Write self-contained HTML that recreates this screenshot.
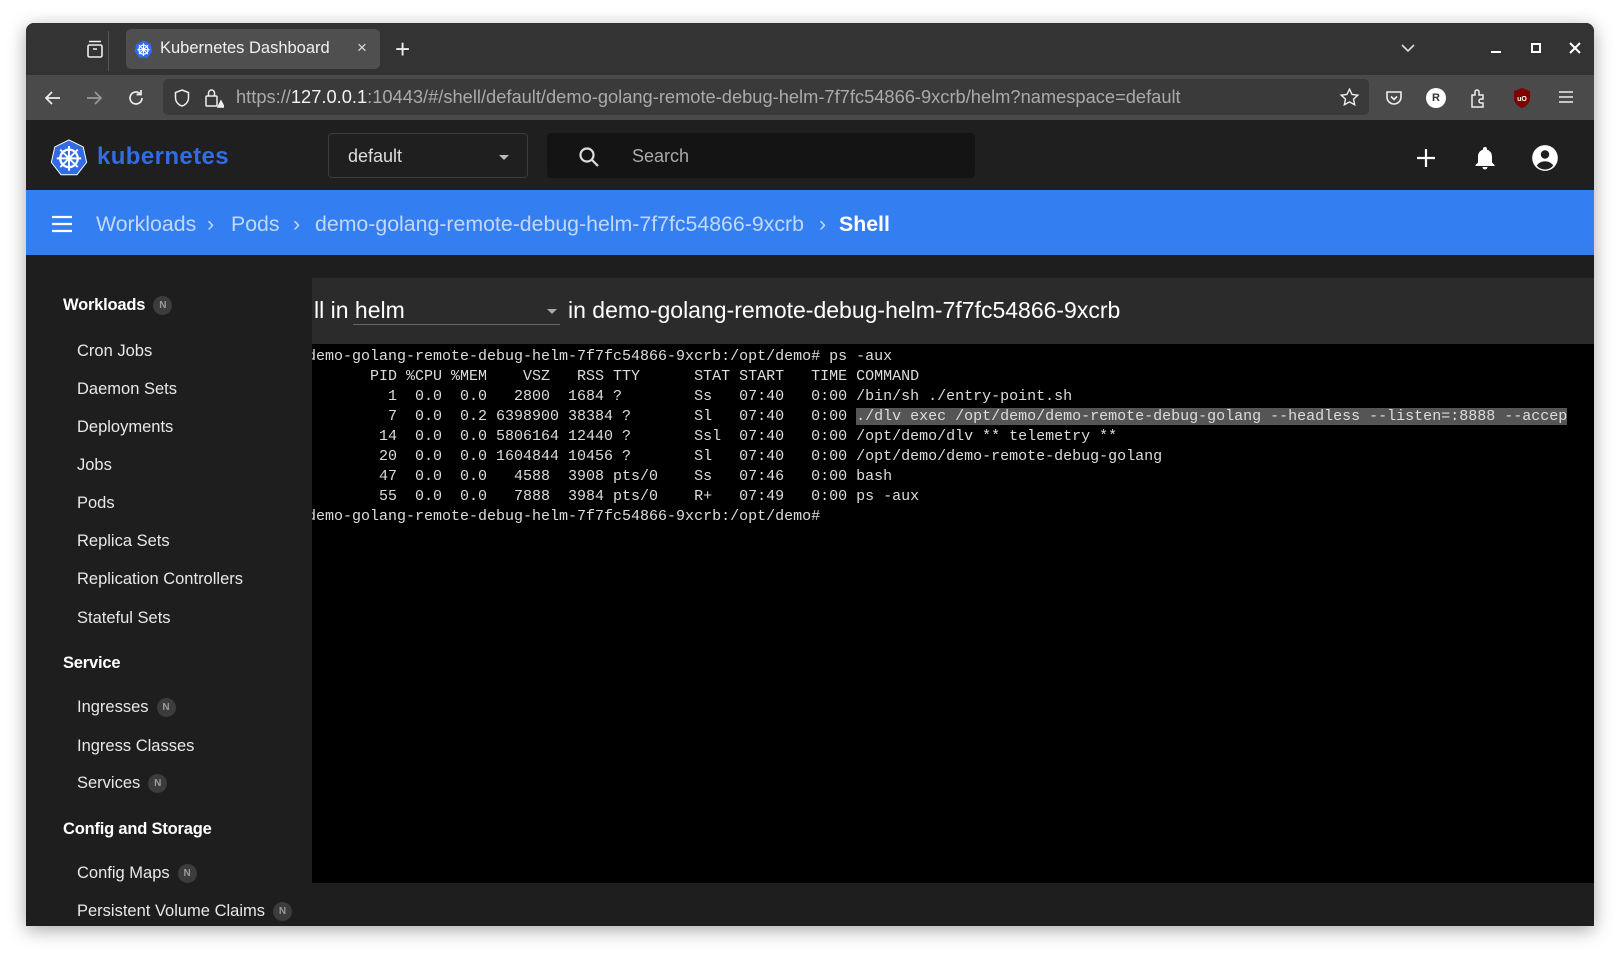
<!DOCTYPE html>
<html><head><meta charset="utf-8"><style>
*{margin:0;padding:0;box-sizing:border-box}
body{width:1620px;height:954px;background:#fff;position:relative;overflow:hidden;font-family:"Liberation Sans",sans-serif}
.win{position:absolute;left:26px;top:23px;width:1568px;height:903px;background:#1e1e1e;border-radius:8px 8px 0 0;overflow:hidden;box-shadow:0 4px 18px rgba(0,0,0,.35)}
.abs{position:absolute}
.tabbar{left:0;top:0;width:1568px;height:52px;background:#333}
.tab{left:100px;top:6px;width:254px;height:40px;background:#4f4f4f;border-radius:5px}
.toolbar{left:0;top:52px;width:1568px;height:45px;background:#4a4a4a}
.url{left:137px;top:56px;width:1206px;height:36px;background:#3a3a3a;border-radius:5px}
.hdr{left:0;top:97px;width:1568px;height:70px;background:#1f1f1f}
.blue{left:0;top:167px;width:1568px;height:65px;background:#337ef0}
.bc{color:rgba(255,255,255,.7);font-size:21.3px;top:189px}
.side{color:#e8e8e8;font-size:16.5px}
.sec{color:#fff;font-size:16.5px;font-weight:bold;letter-spacing:-.2px}
.n{display:inline-block;width:19px;height:19px;border-radius:50%;background:#3c3c3c;color:#9a9a9a;font-size:10px;text-align:center;line-height:19px;vertical-align:middle;margin-left:8px;font-weight:bold}
.term{left:286px;top:321px;width:1282px;height:539px;background:#000;overflow:hidden}
pre{font-family:"Liberation Mono",monospace;font-size:15px;line-height:20px;color:#ddd;position:absolute;left:-5px;top:3px;white-space:pre}
.hl{background:#555}
</style></head><body>
<div class="win">
 <div class="abs tabbar"></div>
 <svg class="abs" style="left:59px;top:16px" width="20" height="20" viewBox="0 0 20 20" fill="none" stroke="#eee" stroke-width="1.6"><rect x="3" y="6" width="14" height="12" rx="1.5"/><path d="M4 2.5h12M8 10h4"/></svg>
 <div class="abs" style="left:82px;top:8px;width:1px;height:40px;background:#555"></div>
 <div class="abs tab"></div>
 <svg class="abs" style="left:108px;top:17px" width="19" height="19" viewBox="0 0 20 20"><polygon points="10,0.5 17.5,4.2 19.3,12.3 14.2,18.8 5.8,18.8 0.7,12.3 2.5,4.2" fill="#326ce5"/><circle cx="10" cy="10.2" r="4.8" fill="none" stroke="#fff" stroke-width="1.4"/><path d="M10 3.5v13.4M3.6 10.2h12.8M5.3 5.5l9.4 9.4M14.7 5.5l-9.4 9.4" stroke="#fff" stroke-width="1.2"/></svg>
 <div class="abs" style="left:134px;top:16px;color:#f0f0f0;font-size:16.5px">Kubernetes Dashboard</div>
 <div class="abs" style="left:331px;top:15px;color:#ddd;font-size:17px">×</div>
 <div class="abs" style="left:369px;top:11px;color:#eee;font-size:26px;font-weight:300">+</div>
 <svg class="abs" style="left:1374px;top:19px" width="16" height="12" viewBox="0 0 16 12" fill="none" stroke="#ddd" stroke-width="1.6"><path d="M2 3l6 6 6-6"/></svg>
 <div class="abs" style="left:1465px;top:28px;width:10px;height:2px;background:#fff"></div>
 <div class="abs" style="left:1505px;top:20px;width:10px;height:10px;border:2px solid #fff"></div>
 <svg class="abs" style="left:1543px;top:19px" width="12" height="12" viewBox="0 0 12 12" stroke="#fff" stroke-width="2"><path d="M1 1l10 10M11 1L1 11"/></svg>

 <div class="abs toolbar"></div>
 <div class="abs url"></div>
 <svg class="abs" style="left:17px;top:65px" width="20" height="20" viewBox="0 0 20 20" fill="none" stroke="#eee" stroke-width="1.7"><path d="M17 10H4M9 4l-6 6 6 6"/></svg>
 <svg class="abs" style="left:58px;top:65px" width="20" height="20" viewBox="0 0 20 20" fill="none" stroke="#999" stroke-width="1.7"><path d="M3 10h13M11 4l6 6-6 6"/></svg>
 <svg class="abs" style="left:100px;top:65px" width="20" height="20" viewBox="0 0 20 20" fill="none" stroke="#eee" stroke-width="1.7"><path d="M16 10a6 6 0 1 1-2-4.5"/><path d="M15 2v4.5h-4.5"/></svg>
 <svg class="abs" style="left:147px;top:65px" width="18" height="20" viewBox="0 0 18 20" fill="none" stroke="#eee" stroke-width="1.5"><path d="M9 2l6.5 2.5v5c0 4.5-3 7.5-6.5 8.5-3.5-1-6.5-4-6.5-8.5v-5z"/></svg>
 <svg class="abs" style="left:178px;top:64px" width="20" height="22" viewBox="0 0 20 22" fill="none" stroke="#eee" stroke-width="1.5"><rect x="2" y="9" width="11" height="10" rx="1"/><path d="M4.5 9V6a3 3 0 0 1 6 0v3"/><path d="M14 20l3-6 3 6z" fill="#eee"/></svg>
 <div class="abs" style="left:210px;top:63px;color:#aaa;font-size:18.3px;white-space:nowrap">https://<span style="color:#f2f2f2">127.0.0.1</span>:10443/#/shell/default/demo-golang-remote-debug-helm-7f7fc54866-9xcrb/helm?namespace=default</div>
 <svg class="abs" style="left:1313px;top:64px" width="21" height="21" viewBox="0 0 24 24" fill="none" stroke="#eee" stroke-width="1.6"><path d="M12 2.5l2.9 6 6.6.8-4.9 4.5 1.3 6.5L12 17l-5.9 3.3 1.3-6.5L2.5 9.3l6.6-.8z"/></svg>
 <svg class="abs" style="left:1358px;top:65px" width="20" height="20" viewBox="0 0 20 20" fill="none" stroke="#eee" stroke-width="1.6"><path d="M3 4h14v5a7 7 0 0 1-14 0z"/><path d="M7 8.5l3 3 3-3"/></svg>
 <div class="abs" style="left:1400px;top:65px;width:20px;height:20px;border-radius:50%;background:#fff;color:#333;font-size:11px;font-weight:bold;text-align:center;line-height:20px">R</div>
 <svg class="abs" style="left:1442px;top:64px" width="20" height="22" viewBox="0 0 20 22" fill="none" stroke="#eee" stroke-width="1.5"><path d="M4 8h3V5a2 2 0 0 1 4 0v3h4v4h-2a2 2 0 0 0 0 4h2v4H4z"/></svg>
 <svg class="abs" style="left:1486px;top:64px" width="20" height="22" viewBox="0 0 20 22"><path d="M10 1l8 3v7c0 5-4 8.5-8 10-4-1.5-8-5-8-10V4z" fill="#800000"/><text x="10" y="14" font-size="7" fill="#fff" text-anchor="middle" font-family="Liberation Sans" font-weight="bold">uO</text></svg>
 <svg class="abs" style="left:1531px;top:66px" width="18" height="16" viewBox="0 0 18 16" stroke="#eee" stroke-width="1.6"><path d="M2 3h14M2 8h14M2 13h14"/></svg>

 <div class="abs hdr"></div>
 <svg class="abs" style="left:24px;top:116px" width="38" height="38" viewBox="0 0 20 20"><polygon points="10,0.5 17.5,4.2 19.3,12.3 14.2,18.8 5.8,18.8 0.7,12.3 2.5,4.2" fill="#326ce5" stroke="#fff" stroke-width=".5"/><circle cx="10" cy="10.2" r="4.6" fill="none" stroke="#fff" stroke-width="1.2"/><circle cx="10" cy="10.2" r="1.3" fill="#fff"/><path d="M10 3.7v13M3.6 10.2h12.8M5.4 5.6l9.2 9.2M14.6 5.6l-9.2 9.2" stroke="#fff" stroke-width="1"/></svg>
 <div class="abs" style="left:71px;top:120px;color:#326ce5;font-size:24px;font-weight:bold;letter-spacing:.4px">kubernetes</div>
 <div class="abs" style="left:302px;top:110px;width:200px;height:45px;border:1px solid #3c3c3c;border-radius:4px"></div>
 <div class="abs" style="left:322px;top:123px;color:#ddd;font-size:18px">default</div>
 <div class="abs" style="left:473px;top:132px;width:0;height:0;border-left:5px solid transparent;border-right:5px solid transparent;border-top:5px solid #bbb"></div>
 <div class="abs" style="left:521px;top:110px;width:428px;height:45px;background:#141414;border-radius:4px"></div>
 <svg class="abs" style="left:551px;top:122px" width="24" height="24" viewBox="0 0 24 24" fill="none" stroke="#ddd" stroke-width="2.2"><circle cx="10" cy="10" r="6.5"/><path d="M15 15l6 6"/></svg>
 <div class="abs" style="left:606px;top:123px;color:#aaa;font-size:18px">Search</div>
 <svg class="abs" style="left:1389px;top:124px" width="22" height="22" viewBox="0 0 22 22" stroke="#fff" stroke-width="2.2"><path d="M11 2v18M2 11h18"/></svg>
 <svg class="abs" style="left:1447px;top:122px" width="24" height="26" viewBox="0 0 24 26" fill="#fff"><path d="M12 2a2 2 0 0 1 2 2v.6c3 .9 5 3.6 5 6.9v6l2.5 2.5v1H2.5v-1L5 17.5v-6c0-3.3 2-6 5-6.9V4a2 2 0 0 1 2-2z"/><path d="M9.5 22h5a2.5 2.5 0 0 1-5 0z"/></svg>
 <svg class="abs" style="left:1505px;top:121px" width="28" height="28" viewBox="0 0 24 24"><circle cx="12" cy="12" r="11" fill="#fff"/><circle cx="12" cy="9" r="3.6" fill="#1f1f1f"/><path d="M5 18.5c1.5-2.5 4-3.6 7-3.6s5.5 1.1 7 3.6A9 9 0 0 1 5 18.5z" fill="#1f1f1f"/></svg>

 <div class="abs blue"></div>
 <svg class="abs" style="left:25px;top:192px" width="22" height="18" viewBox="0 0 22 18" stroke="#fff" stroke-width="2.2"><path d="M1 2h20M1 9h20M1 16h20"/></svg>
 <div class="abs bc" style="left:70px">Workloads</div>
 <div class="abs bc" style="left:181px">›</div>
 <div class="abs bc" style="left:205px">Pods</div>
 <div class="abs bc" style="left:267px">›</div>
 <div class="abs bc" style="left:289px">demo-golang-remote-debug-helm-7f7fc54866-9xcrb</div>
 <div class="abs bc" style="left:793px">›</div>
 <div class="abs bc" style="left:813px;color:#fff;font-weight:bold">Shell</div>

 <div class="abs sec" style="left:37px;top:273px">Workloads<span class="n">N</span></div>
 <div class="abs side" style="left:51px;top:319px">Cron Jobs</div>
 <div class="abs side" style="left:51px;top:357px">Daemon Sets</div>
 <div class="abs side" style="left:51px;top:395px">Deployments</div>
 <div class="abs side" style="left:51px;top:433px">Jobs</div>
 <div class="abs side" style="left:51px;top:471px">Pods</div>
 <div class="abs side" style="left:51px;top:509px">Replica Sets</div>
 <div class="abs side" style="left:51px;top:547px">Replication Controllers</div>
 <div class="abs side" style="left:51px;top:586px">Stateful Sets</div>
 <div class="abs sec" style="left:37px;top:631px">Service</div>
 <div class="abs side" style="left:51px;top:675px">Ingresses<span class="n">N</span></div>
 <div class="abs side" style="left:51px;top:714px">Ingress Classes</div>
 <div class="abs side" style="left:51px;top:751px">Services<span class="n">N</span></div>
 <div class="abs sec" style="left:37px;top:797px">Config and Storage</div>
 <div class="abs side" style="left:51px;top:841px">Config Maps<span class="n">N</span></div>
 <div class="abs side" style="left:51px;top:879px">Persistent Volume Claims<span class="n">N</span></div>

 <div class="abs" style="left:286px;top:255px;width:1282px;height:66px;background:#2b2b2b"></div>
 <div class="abs" style="left:288px;top:274px;color:#fff;font-size:23px">ll in helm</div>
 <div class="abs" style="left:327px;top:301px;width:207px;height:1px;background:#666"></div>
 <div class="abs" style="left:521px;top:286px;width:0;height:0;border-left:5px solid transparent;border-right:5px solid transparent;border-top:5px solid #aaa"></div>
 <div class="abs" style="left:542px;top:274px;color:#fff;font-size:23px">in demo-golang-remote-debug-helm-7f7fc54866-9xcrb</div>

 <div class="abs term"><pre>demo-golang-remote-debug-helm-7f7fc54866-9xcrb:/opt/demo# ps -aux
       PID %CPU %MEM    VSZ   RSS TTY      STAT START   TIME COMMAND
         1  0.0  0.0   2800  1684 ?        Ss   07:40   0:00 /bin/sh ./entry-point.sh
         7  0.0  0.2 6398900 38384 ?       Sl   07:40   0:00 <span class="hl">./dlv exec /opt/demo/demo-remote-debug-golang --headless --listen=:8888 --accep</span>
        14  0.0  0.0 5806164 12440 ?       Ssl  07:40   0:00 /opt/demo/dlv ** telemetry **
        20  0.0  0.0 1604844 10456 ?       Sl   07:40   0:00 /opt/demo/demo-remote-debug-golang
        47  0.0  0.0   4588  3908 pts/0    Ss   07:46   0:00 bash
        55  0.0  0.0   7888  3984 pts/0    R+   07:49   0:00 ps -aux
demo-golang-remote-debug-helm-7f7fc54866-9xcrb:/opt/demo# </pre></div>
</div>
</body></html>
